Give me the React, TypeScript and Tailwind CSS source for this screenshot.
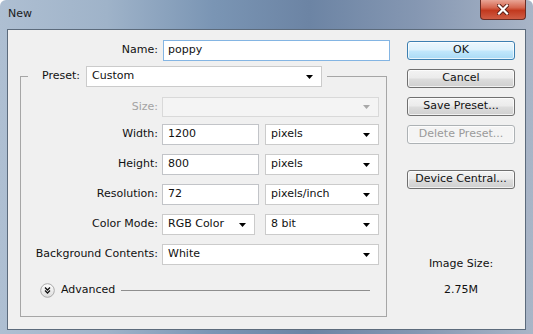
import type { ReactNode } from "react";

function Arrow({ disabled }: { disabled?: boolean }) {
  return (
    <svg width="7" height="4" viewBox="0 0 7 4">
      <polygon points="0,0 7,0 3.5,4" fill={disabled ? "#a8a8a8" : "#000"} />
    </svg>
  );
}

function Select({
  value,
  className,
  disabled,
}: {
  value?: string;
  className: string;
  disabled?: boolean;
}) {
  return (
    <div
      className={`flex h-full items-center justify-between border pl-[5px] pr-[8px] ${
        disabled
          ? "border-[#d9d9d9] bg-[#f4f4f4]"
          : "border-[#cbcbcb] bg-white"
      } ${className}`}
    >
      <span>{value}</span>
      <Arrow disabled={disabled} />
    </div>
  );
}

function Input({ value, className }: { value: string; className: string }) {
  return (
    <div
      className={`flex h-full items-center border border-[#c2c4c8] bg-white pl-[5px] ${className}`}
    >
      {value}
    </div>
  );
}

function Row({
  label,
  children,
  muted,
  className,
}: {
  label: string;
  children: ReactNode;
  muted?: boolean;
  className: string;
}) {
  return (
    <div className={`flex items-center ${className}`}>
      <span
        className={`w-[137px] text-right ${
          muted ? "text-[#a3a3a3]" : "text-[#111]"
        }`}
      >
        {label}
      </span>
      <div className="ml-[4px] flex h-full items-center">{children}</div>
    </div>
  );
}

function Btn({
  children,
  primary,
  disabled,
  className,
}: {
  children: ReactNode;
  primary?: boolean;
  disabled?: boolean;
  className?: string;
}) {
  let look =
    "border-[#707070] bg-[linear-gradient(#f3f3f3_0%,#ebebeb_48%,#dddddd_52%,#cfcfcf_100%)] text-[#111]";
  if (primary)
    look =
      "border-[#3c7fb1] bg-[linear-gradient(#ecf7fd_0%,#dcf1fc_48%,#c2e7fc_52%,#a9daf5_100%)] text-[#111]";
  if (disabled) look = "border-[#adb2b5] bg-[#f4f4f4] text-[#9a9a9a]";
  return (
    <div
      className={`flex h-[19px] w-[108px] items-center justify-center rounded-[3px] border shadow-[inset_0_0_0_1px_rgba(255,255,255,0.7)] ${look} ${className ?? ""}`}
    >
      {children}
    </div>
  );
}

export default function App() {
  return (
    <div className="h-[334px] w-[533px] overflow-hidden rounded-t-[6px] bg-[linear-gradient(90deg,#aebfd2_0%,#9fb3c9_20%,#7a95b4_40%,#6c84a4_58%,#8597b2_78%,#a9b5c7_100%)] font-['DejaVu_Sans',sans-serif] text-[11px] text-[#111]">
      {/* TITLE BAR */}
      <div className="flex h-[29px] items-start justify-between">
        <span className="ml-[8px] mt-[7px] leading-[14px] text-[#1b1b1b]">
          New
        </span>
        <div className="mr-[7px] flex h-[20px] w-[46px] items-center justify-center rounded-b-[4px] border border-t-0 border-[#6b2d25] bg-[linear-gradient(#e9a596_0%,#d5664f_40%,#c2391e_55%,#cf5d45_100%)]">
          <svg width="12" height="11" viewBox="0 0 12 11">
            <path
              d="M2 1.5 L10 9.5 M10 1.5 L2 9.5"
              stroke="#5a1c14"
              strokeWidth="4"
              strokeLinecap="square"
            />
            <path
              d="M2 1.5 L10 9.5 M10 1.5 L2 9.5"
              stroke="#fff"
              strokeWidth="2.2"
              strokeLinecap="square"
            />
          </svg>
        </div>
      </div>

      {/* PANEL */}
      <div className="mx-[7px] flex h-[301px] border border-[#5c6b7c] bg-[#f0f0f0]">
        <div className="w-[382px] pt-[10px]">
          <div className="flex h-[21px] items-center">
            <span className="w-[150px] text-right">Name:</span>
            <div className="ml-[5px] h-full">
              <div className="flex h-full w-[227px] items-center border border-[#84b5e3] bg-white pl-[4px]">
                poppy
              </div>
            </div>
          </div>

          <fieldset className="ml-[12px] mt-[5px] w-[367px] border border-[#a6a6a6] pb-[18px] pt-[10px]">
            <legend className="ml-[7px] flex h-[21px] items-center pl-[14px] pr-[5px]">
              <span>Preset:</span>
              <div className="ml-[6px] h-full">
                <Select value="Custom" className="w-[236px]" />
              </div>
            </legend>

            <Row label="Size:" muted className="h-[20px]">
              <Select disabled className="w-[217px]" />
            </Row>

            <Row label="Width:" className="mt-[7px] h-[21px]">
              <Input value="1200" className="w-[97px]" />
              <Select value="pixels" className="ml-[6px] w-[114px]" />
            </Row>

            <Row label="Height:" className="mt-[9px] h-[21px]">
              <Input value="800" className="w-[97px]" />
              <Select value="pixels" className="ml-[6px] w-[114px]" />
            </Row>

            <Row label="Resolution:" className="mt-[9px] h-[21px]">
              <Input value="72" className="w-[97px]" />
              <Select value="pixels/inch" className="ml-[6px] w-[114px]" />
            </Row>

            <Row label="Color Mode:" className="mt-[9px] h-[21px]">
              <Select value="RGB Color" className="w-[93px]" />
              <Select value="8 bit" className="ml-[10px] w-[114px]" />
            </Row>

            <Row label="Background Contents:" className="mt-[9px] h-[21px]">
              <Select value="White" className="w-[217px]" />
            </Row>

            {/* ADVANCED */}
            <div className="mt-[18px] flex h-[15px] items-center pl-[19px]">
              <svg width="15" height="15" viewBox="0 0 15 15">
                <defs>
                  <linearGradient id="adv" x1="0" y1="0" x2="0" y2="1">
                    <stop offset="0" stopColor="#ffffff" />
                    <stop offset="1" stopColor="#dcdcdc" />
                  </linearGradient>
                </defs>
                <circle
                  cx="7.5"
                  cy="7.5"
                  r="6.8"
                  fill="url(#adv)"
                  stroke="#a9a9a9"
                />
                <path
                  d="M5 4.5 L7.5 7 L10 4.5 M5 7.5 L7.5 10 L10 7.5"
                  stroke="#111"
                  strokeWidth="1.3"
                  fill="none"
                />
              </svg>
              <span className="ml-[6px]">Advanced</span>
              <div className="ml-[6px] mr-[16px] h-px flex-1 bg-[#8e8e8e]" />
            </div>
          </fieldset>
        </div>

        {/* BUTTONS */}
        <div className="ml-[17px] flex w-[108px] flex-col items-center pt-[11px]">
          <Btn primary>OK</Btn>
          <Btn className="mt-[9px]">Cancel</Btn>
          <Btn className="mt-[9px]">Save Preset...</Btn>
          <Btn disabled className="mt-[9px]">
            Delete Preset...
          </Btn>
          <Btn className="mt-[26px]">Device Central...</Btn>

          <span className="mt-[68px] leading-[13px]">Image Size:</span>
          <span className="mt-[13px] leading-[13px]">2.75M</span>
        </div>
      </div>
    </div>
  );
}
